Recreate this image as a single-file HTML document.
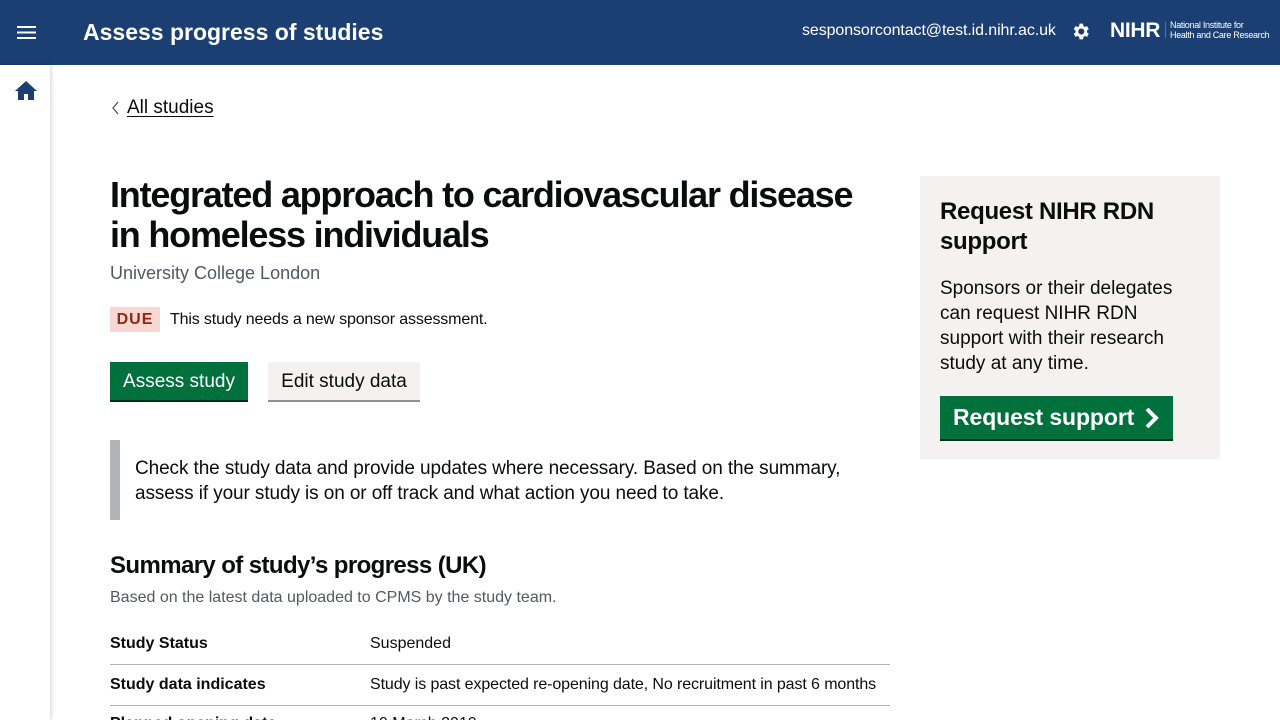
<!DOCTYPE html>
<html style="overflow:hidden;height:720px"><head><meta charset="utf-8"><style>
*{box-sizing:border-box;margin:0;padding:0}
body{width:1280px;height:720px;overflow:hidden;font-family:"Liberation Sans",Arial,sans-serif;color:#0b0c0c;background:#fff;position:relative}
.hdr{position:absolute;left:0;top:0;width:1280px;height:65px;background:#1b3e73}
.side{position:absolute;left:0;top:65px;width:50px;height:655px;background:#fff;box-shadow:1px 0 4px rgba(0,0,0,.18)}
.abs{position:absolute;white-space:nowrap}
</style></head><body>
<div class="hdr">
<svg class="abs" style="left:17px;top:25px" width="20" height="15" viewBox="0 0 20 15"><rect y="1" width="19" height="2" fill="#fff"/><rect y="6.5" width="19" height="2" fill="#fff"/><rect y="12" width="19" height="2" fill="#fff"/></svg>
<div class="abs" style="left:83px;top:19px;color:#fff;font-size:23px;font-weight:bold">Assess progress of studies</div>
<div class="abs" style="left:802px;top:22px;color:#fff;font-size:16px;letter-spacing:-0.1px">sesponsorcontact@test.id.nihr.ac.uk</div>
<svg class="abs" style="left:1070px;top:21px" width="21" height="21" viewBox="0 0 24 24"><path fill="#fff" d="M19.4 13a7.5 7.5 0 0 0 0-2l2.1-1.6-2-3.5-2.5 1a7 7 0 0 0-1.7-1L14.9 3h-4l-.4 2.9a7 7 0 0 0-1.7 1l-2.5-1-2 3.5L6.4 11a7.5 7.5 0 0 0 0 2l-2.1 1.6 2 3.5 2.5-1a7 7 0 0 0 1.7 1l.4 2.9h4l.4-2.9a7 7 0 0 0 1.7-1l2.5 1 2-3.5zM12.9 15.5a3.5 3.5 0 1 1 0-7 3.5 3.5 0 0 1 0 7z"/></svg>
<div class="abs" style="left:1110px;top:19px;color:#fff;font-size:21px;font-weight:bold;letter-spacing:-0.3px">NIHR</div>
<div class="abs" style="left:1165px;top:22px;width:1px;height:16px;background:#c44"></div>
<div class="abs" style="left:1170px;top:20px;color:#fff;font-size:9px;line-height:10px;letter-spacing:-0.3px">National Institute for<br>Health and Care Research</div>
</div>
<div class="side"><svg class="abs" style="left:15px;top:16px" width="22" height="19" viewBox="0 0 22 19"><path fill="#1b3e73" d="M11 0L0 10h3v9h6v-6h4v6h6v-9h3z"/></svg></div>
<svg class="abs" style="left:111px;top:101px" width="10" height="14" viewBox="0 0 10 14"><path d="M7 1L2 7l5 6" stroke="#555" stroke-width="1.3" fill="none"/></svg>
<div class="abs" style="left:127px;top:97px;font-size:19px;text-decoration:underline;text-underline-offset:3px">All studies</div>
<div class="abs" style="left:110px;top:175px;font-size:36px;font-weight:bold;line-height:40px;letter-spacing:-1.2px">Integrated approach to cardiovascular disease<br>in homeless individuals</div>
<div class="abs" style="left:110px;top:263px;font-size:18px;color:#505a5f">University College London</div>
<div class="abs" style="left:110px;top:307px;width:50px;height:25px;background:#f6d7d2;color:#942514;font-weight:bold;font-size:16px;letter-spacing:1px;text-align:center;line-height:25px">DUE</div>
<div class="abs" style="left:170px;top:311px;font-size:16px;letter-spacing:-0.15px">This study needs a new sponsor assessment.</div>
<div class="abs" style="left:110px;top:362px;width:138px;height:40px;background:#00703c;border-bottom:2px solid #002d18;color:#fff;font-size:19px;text-align:center;line-height:39px">Assess study</div>
<div class="abs" style="left:268px;top:362px;width:152px;height:40px;background:#f3f2f1;border-bottom:2px solid #929191;font-size:19px;text-align:center;line-height:39px">Edit study data</div>
<div class="abs" style="left:110px;top:440px;width:10px;height:80px;background:#b1b4b6"></div>
<div class="abs" style="left:135px;top:456px;font-size:19px;line-height:25px;letter-spacing:-0.1px">Check the study data and provide updates where necessary. Based on the summary,<br>assess if your study is on or off track and what action you need to take.</div>
<div class="abs" style="left:110px;top:552px;font-size:24px;font-weight:bold;letter-spacing:-0.6px">Summary of study’s progress (UK)</div>
<div class="abs" style="left:110px;top:589px;font-size:16px;color:#505a5f">Based on the latest data uploaded to CPMS by the study team.</div>
<div class="abs" style="left:110px;top:635px;font-size:16px;font-weight:bold">Study Status</div>
<div class="abs" style="left:370px;top:635px;font-size:16px">Suspended</div>
<div class="abs" style="left:110px;top:664px;width:780px;height:1px;background:#b1b4b6"></div>
<div class="abs" style="left:110px;top:676px;font-size:16px;font-weight:bold">Study data indicates</div>
<div class="abs" style="left:370px;top:676px;font-size:16px;letter-spacing:-0.1px">Study is past expected re-opening date, No recruitment in past 6 months</div>
<div class="abs" style="left:110px;top:705px;width:780px;height:1px;background:#b1b4b6"></div>
<div class="abs" style="left:110px;top:715px;font-size:16px;font-weight:bold">Planned opening date</div>
<div class="abs" style="left:370px;top:715px;font-size:16px">10 March 2019</div>
<div class="abs" style="left:920px;top:176px;width:300px;height:283px;background:#f3f2f1"></div>
<div class="abs" style="left:940px;top:197px;font-size:24px;font-weight:bold;line-height:30px;letter-spacing:-0.3px">Request NIHR RDN<br>support</div>
<div class="abs" style="left:940px;top:276px;font-size:19px;line-height:25px">Sponsors or their delegates<br>can request NIHR RDN<br>support with their research<br>study at any time.</div>
<div class="abs" style="left:940px;top:396px;width:233px;height:45px;background:#00703c;border-bottom:2px solid #002d18;color:#fff;font-size:23px;font-weight:bold;line-height:43px;padding-left:13px;letter-spacing:-0.1px">Request support</div>
<svg class="abs" style="left:1143px;top:407px" width="18" height="22" viewBox="0 0 18 22"><path d="M4 2l9 9-9 9" stroke="#fff" stroke-width="4" fill="none"/></svg>
</body></html>
